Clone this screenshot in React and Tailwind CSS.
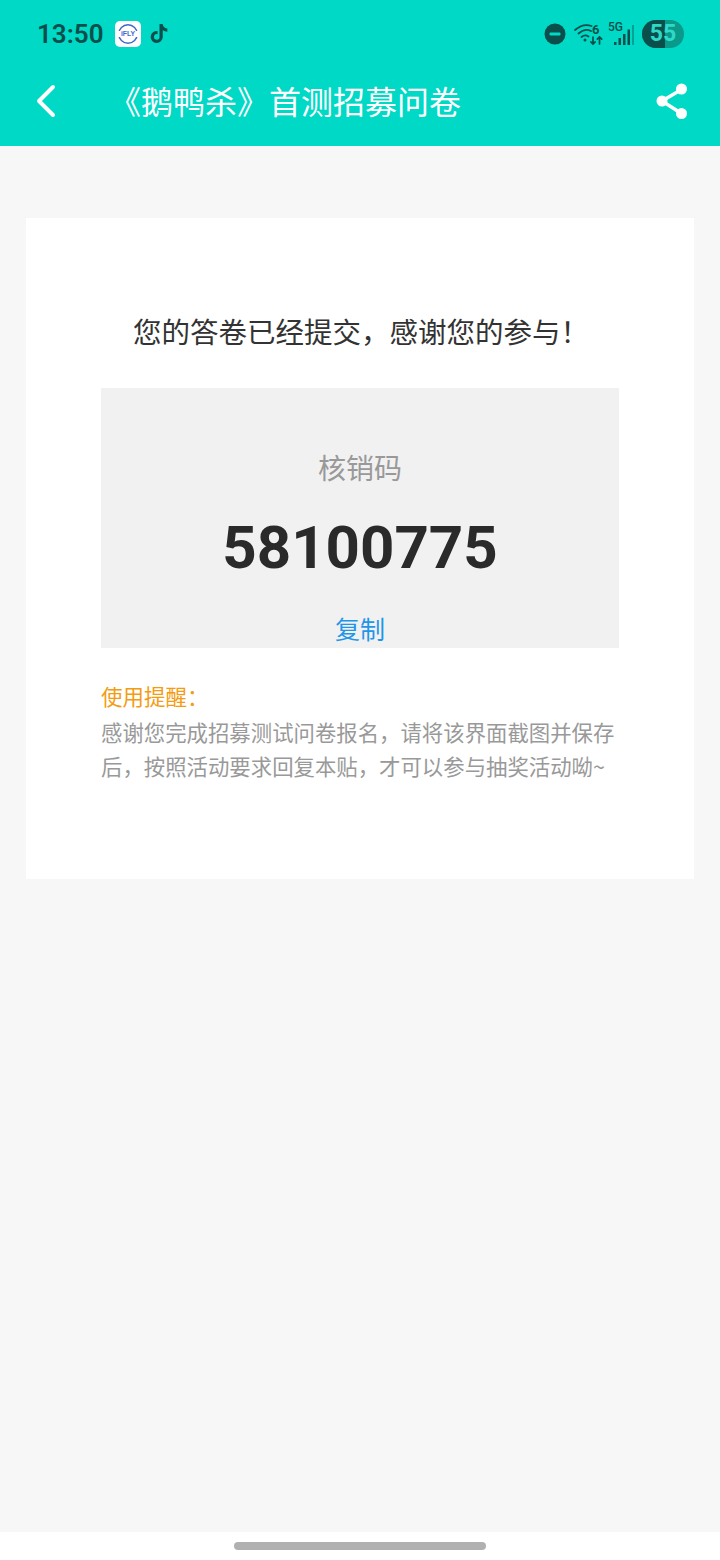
import { FaTiktok } from "react-icons/fa";

function IFly() {
  return (
    <div className="ml-[11px] flex h-[26px] w-[26px] items-center justify-center rounded-[5px] bg-white">
      <svg width="24" height="24" viewBox="0 0 24 24">
        <circle cx="12" cy="12" r="9.300" fill="none" stroke="#3f67c9" strokeWidth="1.400" />
        <rect x="0" y="9" width="24" height="6" fill="#fff" />
        <text x="12" y="14.300" textAnchor="middle" fontSize="6.800" fontWeight="700" fill="#3f67c9" fontFamily="'Liberation Sans', sans-serif">iFLY</text>
      </svg>
    </div>
  );
}

function Dnd() {
  return (
    <svg width="22" height="22" viewBox="0 0 22 22">
      <circle cx="11" cy="11" r="10.500" fill="#0a4f4b" />
      <rect x="5.500" y="9.500" width="11" height="3" rx="1" fill="#00d9c5" />
    </svg>
  );
}

function Wifi() {
  return (
    <svg width="30" height="24" viewBox="0 0 30 24" fill="none" stroke="#0a4f4b" strokeLinecap="round" className="ml-[8px]">
      <path d="M1 8Q9 1 17.500 4" strokeWidth="1.800" />
      <path d="M4.500 11.500Q11 6 17 9" strokeWidth="1.800" />
      <path d="M7.500 15Q11 12 14.500 14.500" strokeWidth="1.800" />
      <circle cx="11" cy="18" r="1.500" fill="#0a4f4b" stroke="none" />
      <text x="18" y="11.500" fontSize="13" fontWeight="700" fill="#0a4f4b" stroke="none" fontFamily="Roboto, sans-serif">6</text>
      <path d="M19 15v7M16.800 19.800 19 22l2.200-2.200M25.500 22v-7M23.300 17.200 25.500 15l2.200 2.200" strokeWidth="1.700" />
    </svg>
  );
}

function Signal() {
  return (
    <div className="relative ml-[4px] h-[26px] w-[26px]">
      <span className="absolute left-0 top-0 text-[12px] font-medium leading-[13px] text-[#0a4f4b] [font-family:Roboto,sans-serif]">5G</span>
      <svg width="26" height="26" viewBox="0 0 26 26" className="absolute left-0 top-0">
        <rect x="6" y="21" width="2.500" height="3" fill="#0a4f4b" />
        <rect x="10.500" y="17" width="2.500" height="7" fill="#0a4f4b" />
        <rect x="15" y="13" width="2.500" height="11" fill="#0a4f4b" />
        <rect x="19.500" y="8.500" width="2.500" height="15.500" fill="#0a4f4b" />
        <rect x="24" y="4" width="2" height="20" fill="#0a4f4b" opacity="0.4" />
      </svg>
    </div>
  );
}

function Battery() {
  return (
    <div className="relative ml-[8px] flex h-[28px] w-[42px] overflow-hidden rounded-full bg-[#0a9a8c]">
      <div className="h-full w-[23px] bg-[#0a4f4b]" />
      <div className="absolute inset-0 flex items-center justify-center text-[23px] font-bold leading-none text-[#2fd9c8] [font-family:Roboto,sans-serif]">55</div>
    </div>
  );
}

function Share() {
  return (
    <svg width="34" height="38" viewBox="0 0 34 38">
      <path d="M6 19 25.500 7.500M6 19l19.500 12.500" stroke="#fff" strokeWidth="3.500" fill="none" />
      <circle cx="6" cy="19" r="5.500" fill="#fff" />
      <circle cx="25.500" cy="7" r="5.500" fill="#fff" />
      <circle cx="25.500" cy="31.500" r="5.500" fill="#fff" />
    </svg>
  );
}

export default function App() {
  return (
    <div className="flex h-[1560px] w-[720px] flex-col bg-[#f7f7f7] [font-family:'Noto_Sans_CJK_SC','Noto_Sans',sans-serif]">
      <header className="h-[146px] shrink-0 bg-[#00d9c5]">
        <div className="flex h-[66px] items-center pl-[37px] pr-[36px] pt-[1px]">
          <span className="text-[26px] font-semibold leading-none text-[#0a4f4b] [font-family:Roboto,sans-serif]">13:50</span>
          <IFly />
          <FaTiktok className="ml-[9px] h-[19px] w-[18px] text-[#0a4f4b]" />
          <div className="ml-auto flex items-center">
            <Dnd />
            <Wifi />
            <Signal />
            <Battery />
          </div>
        </div>
        <div className="flex h-[70px] items-center pl-[36px] pr-[30px]">
          <svg width="20" height="34" viewBox="0 0 20 34" fill="none" stroke="#fff" strokeWidth="4" strokeLinecap="round" strokeLinejoin="round">
            <path d="M17 3 3 17l14 14" />
          </svg>
          <h1 className="ml-[53px] mb-[3px] text-[32px] font-normal leading-none text-white">《鹅鸭杀》首测招募问卷</h1>
          <div className="ml-auto"><Share /></div>
        </div>
      </header>

      <main className="flex-1 px-[26px] pt-[72px]">
        <section className="h-[661px] bg-white px-[75px] pt-[89px]">
          <p className="pl-[32px] text-[28.500px] font-normal leading-[48px] text-[#333333]">您的答卷已经提交，感谢您的参与！</p>
          <div className="mt-[33px] flex h-[260px] w-[518px] flex-col items-center bg-[#f1f1f1]">
            <p className="mt-[57px] text-[28px] leading-[44px] text-[#999999]">核销码</p>
            <p className="mt-[24px] text-[60px] font-bold leading-[70px] text-[#2a2a2a] [font-family:Roboto,sans-serif]">58100775</p>
            <p className="mt-[28px] text-[25px] leading-[34px] text-[#1f96e8]">复制</p>
          </div>
          <p className="mt-[31px] text-[21.500px] leading-[34px] text-[#f39c12]">使用提醒：</p>
          <p className="mt-[2px] w-[518px] text-[21.400px] leading-[34px] text-[#999999]">感谢您完成招募测试问卷报名，请将该界面截图并保存后，按照活动要求回复本贴，才可以参与抽奖活动呦~</p>
        </section>
      </main>

      <footer className="flex h-[28px] shrink-0 justify-center bg-white pt-[10px]">
        <div className="h-[8px] w-[252px] rounded-full bg-[#b0b0b0]" />
      </footer>
    </div>
  );
}
